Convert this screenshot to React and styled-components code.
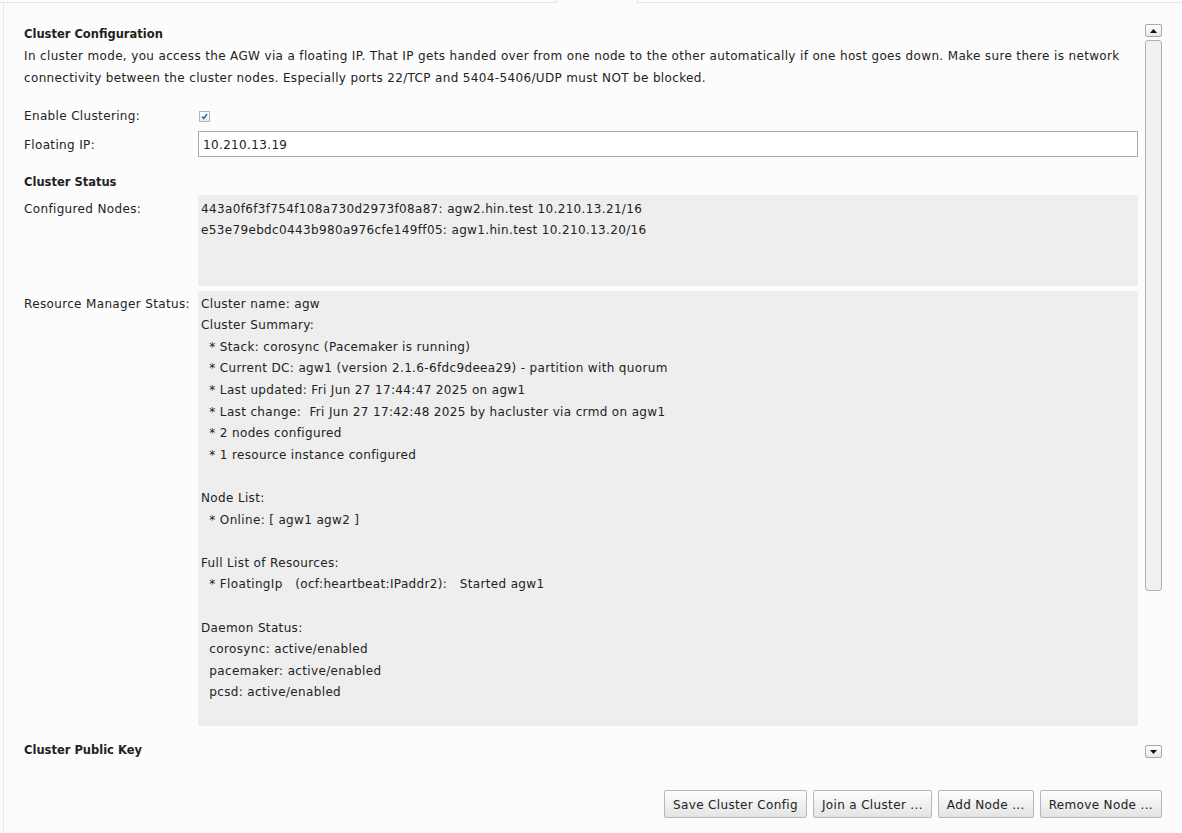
import React from 'react';
import styled, { createGlobalStyle } from 'styled-components';

const GlobalStyle = createGlobalStyle`
    html, body {
        margin: 0;
        padding: 0;
        background: #fcfcfc;
    }
    body {
        font-family: "DejaVu Sans", Verdana, sans-serif;
        font-size: 12px;
        letter-spacing: 0.35px;
        color: #222;
    }
`;

const Page = styled.div`
    width: 1182px;
    height: 833px;
    overflow: hidden;
    display: flex;
    flex-direction: column;
`;

const TabStrip = styled.div`
    display: flex;
    height: 3px;
    flex-shrink: 0;
`;

const TabLine = styled.div`
    flex: ${props => (props.grow ? 1 : 'none')};
    width: ${props => props.width || 'auto'};
    border-bottom: ${props => (props.active ? 'none' : '1px solid #e4e4e4')};
    border-left: ${props => (props.active ? '1px solid #e4e4e4' : 'none')};
    border-right: ${props => (props.active ? '1px solid #e4e4e4' : 'none')};
    box-sizing: border-box;
`;

const Panel = styled.div`
    flex: 1;
    margin-left: 3px;
    border-left: 1px solid #e8e8e8;
    padding: 20px 20px 0 20px;
    display: flex;
    flex-direction: column;
`;

const Main = styled.div`
    display: flex;
    gap: 7px;
`;

const Content = styled.div`
    width: 1114px;
    display: flex;
    flex-direction: column;
`;

const SectionTitle = styled.div`
    font-weight: bold;
    font-size: 11.5px;
    letter-spacing: 0;
    line-height: 22px;
    margin-top: ${props => props.top || 0}px;
`;

const Paragraph = styled.div`
    line-height: 22px;
    color: #222;
`;

const Row = styled.div`
    display: flex;
    align-items: ${props => props.align || 'center'};
    margin-top: ${props => props.top || 0}px;
`;

const Label = styled.div`
    width: 174px;
    flex-shrink: 0;
    line-height: 21.6px;
    padding-top: ${props => props.pad || 0}px;
`;

const CheckBox = styled.span`
    width: 9px;
    height: 9px;
    margin-left: 1px;
    border: 1px solid #b5b5b5;
    background: linear-gradient(#ffffff, #ececec);
    display: flex;
    align-items: center;
    justify-content: center;
`;

const TextInput = styled.input`
    flex: 1;
    height: 26px;
    box-sizing: border-box;
    border: 1px solid #a9a9a9;
    background: #fff;
    padding: 3px 4px 0;
    font-family: inherit;
    font-size: 12px;
    letter-spacing: 0.35px;
    color: #222;
    outline: none;
`;

const InfoBox = styled.div`
    flex: 1;
    background: #eeeeee;
    white-space: pre;
    line-height: 21.6px;
    padding: ${props => props.padTop || 1}px 3px 0 3px;
    height: ${props => props.height}px;
    box-sizing: border-box;
    overflow: hidden;
`;

const ScrollBar = styled.div`
    width: 17px;
    display: flex;
    flex-direction: column;
    padding-top: 1px;
`;

const ScrollButton = styled.div`
    width: 17px;
    height: 13px;
    box-sizing: border-box;
    border: 1px solid #a8a8a8;
    border-radius: 2px;
    background: linear-gradient(#ffffff, #e8e8e8);
    display: flex;
    align-items: center;
    justify-content: center;
    margin-top: ${props => props.top || 0}px;
`;

const ScrollThumb = styled.div`
    width: 17px;
    height: 551px;
    box-sizing: border-box;
    margin-top: 3px;
    border: 1px solid #b0b0b0;
    border-radius: 3px;
    background: #f0f0f0;
`;

const ButtonBar = styled.div`
    display: flex;
    justify-content: flex-end;
    gap: 6px;
    margin-top: 29px;
`;

const Button = styled.button`
    height: 28px;
    padding: 2px 8px 0;
    font-family: "DejaVu Sans", Verdana, sans-serif;
    font-size: 12px;
    letter-spacing: 0.35px;
    color: #222;
    border: 1px solid #b8b8b8;
    border-radius: 2px;
    background: linear-gradient(#fdfdfd, #e4e4e4);
    cursor: pointer;
`;

const Arrow = ({ down }) => (
    <svg width="7" height="4" viewBox="0 0 7 4">
        <polygon points={down ? '0,0 7,0 3.5,4' : '0,4 7,4 3.5,0'} fill="#111" />
    </svg>
);

const NODES = `443a0f6f3f754f108a730d2973f08a87: agw2.hin.test 10.210.13.21/16
e53e79ebdc0443b980a976cfe149ff05: agw1.hin.test 10.210.13.20/16`;

const STATUS = `Cluster name: agw
Cluster Summary:
  * Stack: corosync (Pacemaker is running)
  * Current DC: agw1 (version 2.1.6-6fdc9deea29) - partition with quorum
  * Last updated: Fri Jun 27 17:44:47 2025 on agw1
  * Last change:  Fri Jun 27 17:42:48 2025 by hacluster via crmd on agw1
  * 2 nodes configured
  * 1 resource instance configured

Node List:
  * Online: [ agw1 agw2 ]

Full List of Resources:
  * FloatingIp   (ocf:heartbeat:IPaddr2):   Started agw1

Daemon Status:
  corosync: active/enabled
  pacemaker: active/enabled
  pcsd: active/enabled
`;

export default function App() {
    return (
        <Page>
            <GlobalStyle />
            <TabStrip>
                <TabLine width="556px" />
                <TabLine width="82px" active />
                <TabLine grow />
            </TabStrip>
            <Panel>
                <Main>
                    <Content>
                        <SectionTitle>Cluster Configuration</SectionTitle>
                        <Paragraph>
                            In cluster mode, you access the AGW via a floating IP. That IP gets handed over from one node to the other automatically if one host goes down. Make sure there is network connectivity between the cluster nodes. Especially ports 22/TCP and 5404-5406/UDP must NOT be blocked.
                        </Paragraph>
                        <Row top={17}>
                            <Label>Enable Clustering:</Label>
                            <CheckBox>
                                <svg width="7" height="7" viewBox="0 0 7 7">
                                    <path d="M1 3.5 L2.8 5.5 L6 1" stroke="#2a6fc9" strokeWidth="1.6" fill="none" />
                                </svg>
                            </CheckBox>
                        </Row>
                        <Row top={3}>
                            <Label pad={4}>Floating IP:</Label>
                            <TextInput defaultValue="10.210.13.19" />
                        </Row>
                        <SectionTitle top={14}>Cluster Status</SectionTitle>
                        <Row top={2} align="flex-start">
                            <Label pad={4}>Configured Nodes:</Label>
                            <InfoBox height={91} padTop={4}>{NODES}</InfoBox>
                        </Row>
                        <Row top={5} align="flex-start">
                            <Label pad={3}>Resource Manager Status:</Label>
                            <InfoBox height={435} padTop={3}>{STATUS}</InfoBox>
                        </Row>
                        <SectionTitle top={13}>Cluster Public Key</SectionTitle>
                    </Content>
                    <ScrollBar>
                        <ScrollButton>
                            <Arrow />
                        </ScrollButton>
                        <ScrollThumb />
                        <ScrollButton top={154}>
                            <Arrow down />
                        </ScrollButton>
                    </ScrollBar>
                </Main>
                <ButtonBar>
                    <Button>Save Cluster Config</Button>
                    <Button>Join a Cluster ...</Button>
                    <Button>Add Node ...</Button>
                    <Button>Remove Node ...</Button>
                </ButtonBar>
            </Panel>
        </Page>
    );
}
